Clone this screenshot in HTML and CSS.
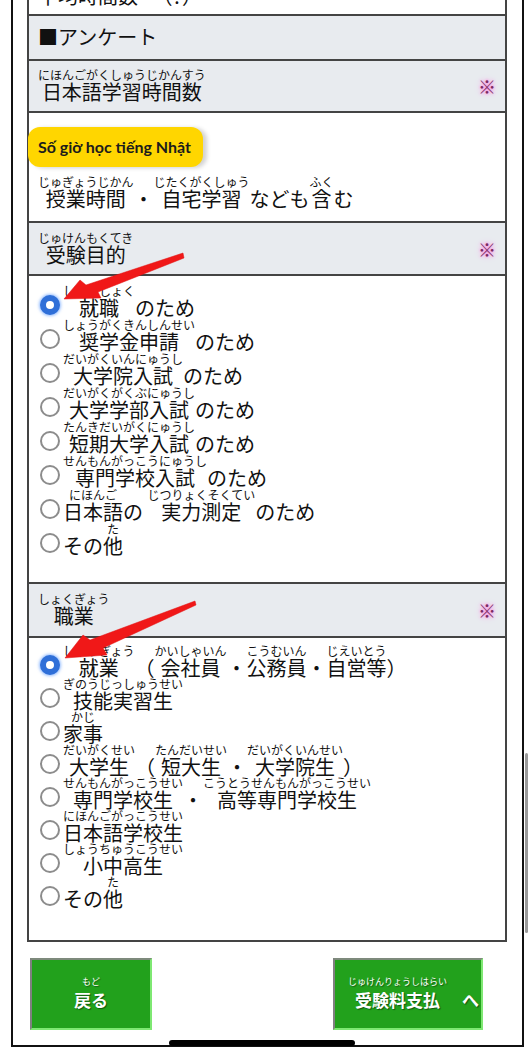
FILE: index.html
```html
<!DOCTYPE html>
<html lang="ja">
<head>
<meta charset="utf-8">
<title>アンケート</title>
<link rel="stylesheet" href="styles.css">
</head>
<body>
<div class="frame">
  <div class="form">
    <div class="row cut"><span>平均時間数 ・（?）</span></div>
    <div class="row head plain">■アンケート</div>
    <div class="row head q1">
      <span class="label"><ruby>日本語学習時間数<rt>にほんごがくしゅうじかんすう</rt></ruby></span>
      <span class="req">※</span>
    </div>
    <div class="row note">
      <div class="badge">Số giờ học tiếng Nhật</div>
      <p class="hint"><ruby>授業時間<rt>じゅぎょうじかん</rt></ruby>・<ruby>自宅学習<rt>じたくがくしゅう</rt></ruby>なども<ruby>含<rt>ふく</rt></ruby>む</p>
    </div>
    <div class="row head q2">
      <span class="label"><ruby>受験目的<rt>じゅけんもくてき</rt></ruby></span>
      <span class="req">※</span>
    </div>
    <div class="row opts purpose">
      <label class="opt"><input type="radio" name="p" class="radio" checked><span class="txt"><ruby>就職<rt>しゅうしょく</rt></ruby>のため</span></label>
      <label class="opt"><input type="radio" name="p" class="radio"><span class="txt"><ruby>奨学金申請<rt>しょうがくきんしんせい</rt></ruby>のため</span></label>
      <label class="opt"><input type="radio" name="p" class="radio"><span class="txt"><ruby>大学院入試<rt>だいがくいんにゅうし</rt></ruby>のため</span></label>
      <label class="opt"><input type="radio" name="p" class="radio"><span class="txt"><ruby>大学学部入試<rt>だいがくがくぶにゅうし</rt></ruby>のため</span></label>
      <label class="opt"><input type="radio" name="p" class="radio"><span class="txt"><ruby>短期大学入試<rt>たんきだいがくにゅうし</rt></ruby>のため</span></label>
      <label class="opt"><input type="radio" name="p" class="radio"><span class="txt"><ruby>専門学校入試<rt>せんもんがっこうにゅうし</rt></ruby>のため</span></label>
      <label class="opt"><input type="radio" name="p" class="radio"><span class="txt"><ruby>日本語<rt>にほんご</rt></ruby>の <ruby>実力測定<rt>じつりょくそくてい</rt></ruby>のため</span></label>
      <label class="opt"><input type="radio" name="p" class="radio"><span class="txt">その<ruby>他<rt>た</rt></ruby></span></label>
    </div>
    <div class="row head q3">
      <span class="label"><ruby>職業<rt>しょくぎょう</rt></ruby></span>
      <span class="req">※</span>
    </div>
    <div class="row opts job">
      <label class="opt"><input type="radio" name="j" class="radio" checked><span class="txt"><ruby>就業<rt>しゅうぎょう</rt></ruby>（<ruby>会社員<rt>かいしゃいん</rt></ruby>・<ruby>公務員<rt>こうむいん</rt></ruby>・<ruby>自営等<rt>じえいとう</rt></ruby>）</span></label>
      <label class="opt"><input type="radio" name="j" class="radio"><span class="txt"><ruby>技能実習生<rt>ぎのうじっしゅうせい</rt></ruby></span></label>
      <label class="opt"><input type="radio" name="j" class="radio"><span class="txt"><ruby>家事<rt>かじ</rt></ruby></span></label>
      <label class="opt"><input type="radio" name="j" class="radio"><span class="txt"><ruby>大学生<rt>だいがくせい</rt></ruby>（<ruby>短大生<rt>たんだいせい</rt></ruby>・<ruby>大学院生<rt>だいがくいんせい</rt></ruby>）</span></label>
      <label class="opt"><input type="radio" name="j" class="radio"><span class="txt"><ruby>専門学校生<rt>せんもんがっこうせい</rt></ruby>・<ruby>高等専門学校生<rt>こうとうせんもんがっこうせい</rt></ruby></span></label>
      <label class="opt"><input type="radio" name="j" class="radio"><span class="txt"><ruby>日本語学校生<rt>にほんごがっこうせい</rt></ruby></span></label>
      <label class="opt"><input type="radio" name="j" class="radio"><span class="txt"><ruby>小中高生<rt>しょうちゅうこうせい</rt></ruby></span></label>
      <label class="opt"><input type="radio" name="j" class="radio"><span class="txt">その<ruby>他<rt>た</rt></ruby></span></label>
    </div>
  </div>
  <div class="actions">
    <button class="btn back"><ruby>戻る<rt>もど</rt></ruby></button>
    <button class="btn pay"><ruby>受験料支払<rt>じゅけんりょうしはらい</rt></ruby><span class="to">へ</span></button>
  </div>
</div>

<svg class="arrows" width="532" height="1053" viewBox="0 0 532 1053" aria-hidden="true">
  <polygon points="64,299 80,280 86,285 183,253 184,258 98,292 101,298" />
  <polygon points="65,658 83,635 90,640 195,601 196,605 103,648 107,655" />
</svg>
<div class="scrollbar"></div>
<div class="home-bar"></div>
</body>
</html>
```

FILE: styles.css
```css
html, body {
  margin: 0;
  padding: 0;
}

body {
  width: 532px;
  height: 1053px;
  overflow: hidden;
  position: relative;
  background: #fff;
  color: #111;
  font-family: "Noto Sans CJK JP", "Noto Sans", sans-serif;
}

.frame {
  margin-left: 11px;
  width: 480px;
  padding: 0 15px 0 14px;
  border: 2px solid #111;
  border-top: none;
}

.form {
  margin-top: -25px;
  border-left: 2px solid #444;
  border-right: 2px solid #444;
}

.row {
  border-bottom: 2px solid #444;
  padding-left: 9px;
  padding-right: 9px;
  font-size: 20px;
  line-height: 22px;
}

.cut {
  padding-top: 10px;
  padding-bottom: 7px;
}

.head {
  background: #e8ebef;
  display: flex;
  align-items: center;
  justify-content: space-between;
}

.plain {
  padding-top: 10px;
  padding-bottom: 11px;
}

.q1 {
  padding-top: 8px;
  padding-bottom: 8px;
}

.q2 {
  padding-top: 9px;
  padding-bottom: 8px;
}

.q3 {
  padding-top: 9px;
  padding-bottom: 9px;
}

.req {
  font-size: 18px;
  line-height: 22px;
  color: #7a2a62;
  margin-right: 0;
  text-shadow: 0 0 3px #ff5fd6, 0 0 6px #ff9ae8;
}

ruby {
  display: inline-flex;
  flex-direction: column-reverse;
  align-items: center;
  vertical-align: bottom;
}

rt {
  display: block;
  font-size: 12px;
  line-height: 12px;
  text-align: center;
  white-space: nowrap;
}

.note {
  padding-top: 14px;
  padding-bottom: 11px;
}

.badge {
  display: inline-block;
  margin-left: -10px;
  height: 40px;
  box-sizing: border-box;
  padding: 0 12px 0 10px;
  background: #ffd600;
  border-radius: 12px;
  box-shadow: 4px 1px 4px rgba(0, 0, 0, 0.18);
  font-family: "Lato", "Open Sans", sans-serif;
  font-weight: 700;
  font-size: 16px;
  line-height: 40px;
  color: #1c1c1c;
}

.hint {
  margin: 9px 0 0;
}

.opts {
  display: flex;
  flex-direction: column;
}

.purpose {
  padding-top: 9px;
  padding-bottom: 25px;
}

.job {
  padding-top: 8px;
  padding-bottom: 30px;
}

.opt {
  display: flex;
  align-items: flex-end;
  height: 34px;
  padding-left: 2px;
}

.job .opt {
  height: 33px;
}

.radio {
  appearance: none;
  -webkit-appearance: none;
  flex: none;
  box-sizing: border-box;
  width: 20px;
  height: 20px;
  margin: 0 3px 4px 0;
  border: 2px solid #8c8c8c;
  border-radius: 50%;
  background: #fff;
}

.radio:checked {
  border: 6px solid #2f6fd8;
  box-shadow: 0 0 3px 1px rgba(70, 140, 255, 0.55);
}

.txt {
  white-space: nowrap;
}

.actions {
  display: flex;
  justify-content: space-between;
  padding: 16px 24px 15px 3px;
}

.btn {
  display: flex;
  align-items: center;
  justify-content: center;
  height: 72px;
  box-sizing: border-box;
  background: #22a11c;
  border: 2px solid;
  border-color: #7e8a7c #7ee872 #7ee872 #808080;
  color: #fff;
  font-family: "Noto Sans CJK JP", sans-serif;
  font-weight: 700;
  font-size: 17px;
  line-height: 22px;
  text-shadow: 1px 1px 1px rgba(0, 0, 0, 0.45);
  padding: 0;
}

.btn rt {
  font-size: 9px;
  line-height: 12px;
  font-weight: 400;
  margin-bottom: 1px;
}

.back {
  width: 122px;
  padding-bottom: 2px;
}

.pay {
  width: 150px;
  justify-content: flex-start;
  align-items: flex-end;
  padding-left: 13px;
  padding-bottom: 17px;
}

.to {
  margin-left: 15px;
}

.arrows {
  position: absolute;
  left: 0;
  top: 0;
  pointer-events: none;
}

.arrows polygon {
  fill: #f01818;
  stroke: #e01010;
  stroke-width: 0.5;
  stroke-linejoin: round;
}

.scrollbar {
  position: absolute;
  left: 525px;
  top: 753px;
  width: 3px;
  height: 180px;
  border-radius: 2px;
  background: #9a9a9a;
}

.home-bar {
  position: absolute;
  left: 169px;
  top: 1040px;
  width: 186px;
  height: 6px;
  border-radius: 3px;
  background: #000;
}
```
